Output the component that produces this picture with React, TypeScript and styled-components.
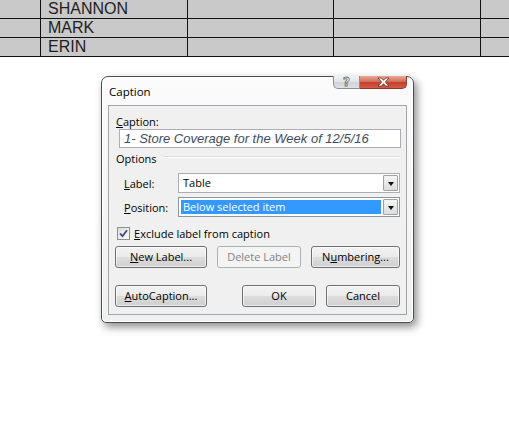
import { Fragment } from "react";
import styled, { createGlobalStyle } from "styled-components";

const GlobalStyle = createGlobalStyle`
  html, body {
    margin: 0;
    padding: 0;
    background: #fff;
  }
  body {
    font-family: "Open Sans", "Noto Sans", sans-serif;
  }
`;

const Page = styled.div`
  width: 509px;
  height: 437px;
  overflow: hidden;
  background: #fff;
`;

/* the Word table behind the dialog */
const Table = styled.div`
  display: grid;
  grid-template-columns: 41px 147px 146px 147px 1fr;
  grid-auto-rows: 19px;
  background: #c9c9c9;
`;

const Cell = styled.div<{ $last?: boolean }>`
  border-right: ${(p) => (p.$last ? "none" : "1px solid #111")};
  border-bottom: 1px solid #111;
  padding-left: 7px;
  font-family: "Liberation Sans", Arial, sans-serif;
  font-size: 16px;
  line-height: 18px;
  color: #1e1e1e;
`;

const DialogSpot = styled.div`
  margin: 19px 0 0 101px;
`;

const Window = styled.div`
  width: 313px;
  height: 247px;
  box-sizing: border-box;
  border: 1px solid #4e4e4e;
  border-radius: 7px 7px 5px 5px;
  background: linear-gradient(#fbfbfc, #eef0f2);
  box-shadow: inset 0 0 0 1px rgba(255, 255, 255, 0.9),
    3px 4px 9px rgba(0, 0, 0, 0.45);
  padding: 0 6px 7px 6px;
  display: flex;
  flex-direction: column;
`;

const TitleBar = styled.div`
  height: 28px;
  display: flex;
  justify-content: space-between;
`;

const TitleText = styled.div`
  align-self: center;
  padding-left: 1px;
  font-size: 11.5px;
  color: #000;
`;

const CaptionButtons = styled.div`
  display: flex;
  margin-top: -1px;
  height: 13px;
`;

const CapButton = styled.div<{ $close?: boolean }>`
  width: ${(p) => (p.$close ? "47px" : "27px")};
  box-sizing: border-box;
  display: flex;
  align-items: center;
  justify-content: center;
  border: 1px solid ${(p) => (p.$close ? "#8d3a2c" : "#8b8f96")};
  border-top: none;
  border-left: ${(p) => (p.$close ? "none" : "1px solid #8b8f96")};
  border-radius: ${(p) => (p.$close ? "0 0 5px 0" : "0 0 0 5px")};
  background: ${(p) =>
    p.$close
      ? "linear-gradient(#e9a898 0%, #d4705d 45%, #c2402c 55%, #d55b45 100%)"
      : "linear-gradient(#f2f3f5 0%, #e1e4e8 45%, #ced3da 55%, #dde1e6 100%)"};
`;

const HelpGlyph = styled.span`
  font-family: "DejaVu Sans", sans-serif;
  font-weight: bold;
  font-size: 12px;
  line-height: 12px;
  color: #f7f7f7;
  -webkit-text-stroke: 0.8px #6a6e76;
`;

const Content = styled.div`
  flex: 1;
  border: 1px solid #a4a4a4;
  background: #f0f0f0;
  padding: 8px 6px 0 6px;
  display: flex;
  flex-direction: column;
  font-size: 11px;
  color: #000;
`;

const Mn = styled.span`
  text-decoration: underline;
  text-underline-offset: 1px;
`;

const FieldLabel = styled.div`
  line-height: 15px;
  padding-left: 1px;
`;

const TextBox = styled.div`
  margin-left: 4px;
  width: 282px;
  height: 19px;
  box-sizing: border-box;
  border: 1px solid #abadb3;
  background: #fff;
  padding-left: 4px;
  font-family: "Liberation Sans", Arial, sans-serif;
  font-style: italic;
  font-size: 13px;
  line-height: 17px;
  color: #3f4b60;
  white-space: nowrap;
`;

const GroupHead = styled.div`
  margin-top: 3px;
  height: 16px;
  display: flex;
  align-items: center;
  gap: 6px;
  padding-left: 1px;
  line-height: 16px;

  &::after {
    content: "";
    flex: 1;
    height: 0;
    margin-top: -4px;
    border-top: 1px solid #d5dfe5;
    border-bottom: 1px solid #fff;
  }
`;

const FieldRow = styled.div<{ $gap: number }>`
  margin-top: ${(p) => p.$gap}px;
  display: flex;
  align-items: center;
  height: 20px;
`;

const RowLabel = styled.div`
  width: 63px;
  box-sizing: border-box;
  padding-left: 9px;
`;

const Combo = styled.div<{ $focus?: boolean }>`
  width: 222px;
  height: 20px;
  box-sizing: border-box;
  border: 1px solid ${(p) => (p.$focus ? "#8d95a0" : "#abadb3")};
  background: #fff;
  display: flex;
  align-items: stretch;
  padding: 1px;
`;

const ComboValue = styled.div<{ $selected?: boolean }>`
  flex: 1;
  margin: ${(p) => (p.$selected ? "1px 2px 1px 1px" : "0")};
  padding-left: ${(p) => (p.$selected ? "2px" : "3px")};
  background: ${(p) => (p.$selected ? "#3399ff" : "transparent")};
  color: ${(p) => (p.$selected ? "#fff" : "#000")};
  line-height: ${(p) => (p.$selected ? "14px" : "16px")};
`;

const DropButton = styled.div`
  width: 15px;
  box-sizing: border-box;
  border: 1px solid #a2a2a2;
  border-radius: 1px;
  background: linear-gradient(#f5f5f5, #dcdcdc);
  display: flex;
  align-items: center;
  justify-content: center;

  &::before {
    content: "";
    border-left: 3.5px solid transparent;
    border-right: 3.5px solid transparent;
    border-top: 4px solid #111;
    margin-top: 1px;
  }
`;

const CheckRow = styled.div`
  margin-top: 9px;
  height: 14px;
  display: flex;
  align-items: center;
  gap: 4px;
  padding-left: 2px;
`;

const CheckBox = styled.div`
  width: 13px;
  height: 13px;
  box-sizing: border-box;
  border: 1px solid #8e8f8f;
  background: linear-gradient(135deg, #dcdcdc, #fbfbfb);
  display: flex;
  align-items: center;
  justify-content: center;
`;

const ButtonRow = styled.div<{ $gap: number }>`
  margin-top: ${(p) => p.$gap}px;
  display: flex;
  justify-content: space-between;
  align-items: center;
`;

const ButtonPair = styled.div`
  display: flex;
  gap: 10px;
`;

const Button = styled.div<{ $w: number; $disabled?: boolean }>`
  width: ${(p) => p.$w}px;
  height: 22px;
  box-sizing: border-box;
  border: 1px solid ${(p) => (p.$disabled ? "#adb2b5" : "#707070")};
  border-radius: 3px;
  background: ${(p) =>
    p.$disabled
      ? "#f4f4f4"
      : "linear-gradient(#f2f2f2 0%, #ebebeb 50%, #dddddd 51%, #cfcfcf 100%)"};
  box-shadow: inset 0 0 0 1px ${(p) => (p.$disabled ? "transparent" : "rgba(255,255,255,0.6)")};
  color: ${(p) => (p.$disabled ? "#838383" : "#000")};
  display: flex;
  align-items: center;
  justify-content: center;
  line-height: 20px;
`;

const names = ["SHANNON", "MARK", "ERIN"];

export default function App() {
  return (
    <Page>
      <GlobalStyle />
      <Table>
        {names.map((n) => (
          <Fragment key={n}>
            <Cell />
            <Cell>{n}</Cell>
            <Cell />
            <Cell />
            <Cell $last />
          </Fragment>
        ))}
      </Table>

      <DialogSpot>
        <Window>
          <TitleBar>
            <TitleText>Caption</TitleText>
            <CaptionButtons>
              <CapButton>
                <HelpGlyph>?</HelpGlyph>
              </CapButton>
              <CapButton $close>
                <svg width="13" height="10" viewBox="0 0 13 10">
                  <path
                    d="M1 1 H4.5 L6.5 3.3 L8.5 1 H12 L8.3 5 L12 9 H8.5 L6.5 6.7 L4.5 9 H1 L4.7 5 Z"
                    fill="#fff"
                    stroke="#6b2a20"
                    strokeWidth="0.8"
                    strokeLinejoin="round"
                  />
                </svg>
              </CapButton>
            </CaptionButtons>
          </TitleBar>

          <Content>
            <FieldLabel>
              <Mn>C</Mn>aption:
            </FieldLabel>
            <TextBox>1- Store Coverage for the Week of 12/5/16</TextBox>

            <GroupHead>Options</GroupHead>

            <FieldRow $gap={6}>
              <RowLabel>
                <Mn>L</Mn>abel:
              </RowLabel>
              <Combo>
                <ComboValue>Table</ComboValue>
                <DropButton />
              </Combo>
            </FieldRow>
            <FieldRow $gap={4}>
              <RowLabel>
                <Mn>P</Mn>osition:
              </RowLabel>
              <Combo $focus>
                <ComboValue $selected>Below selected item</ComboValue>
                <DropButton />
              </Combo>
            </FieldRow>

            <CheckRow>
              <CheckBox>
                <svg width="9" height="9" viewBox="0 0 9 9">
                  <path
                    d="M1 4.5 L3.5 7.2 L8 1.2"
                    fill="none"
                    stroke="#3a4a78"
                    strokeWidth="1.8"
                  />
                </svg>
              </CheckBox>
              <span>
                <Mn>E</Mn>xclude label from caption
              </span>
            </CheckRow>

            <ButtonRow $gap={6}>
              <Button $w={92}>
                <span>
                  <Mn>N</Mn>ew Label...
                </span>
              </Button>
              <Button $w={84} $disabled>
                Delete Label
              </Button>
              <Button $w={89}>
                <span>
                  N<Mn>u</Mn>mbering...
                </span>
              </Button>
            </ButtonRow>

            <ButtonRow $gap={17}>
              <Button $w={92}>
                <span>
                  <Mn>A</Mn>utoCaption...
                </span>
              </Button>
              <ButtonPair>
                <Button $w={74}>OK</Button>
                <Button $w={74}>Cancel</Button>
              </ButtonPair>
            </ButtonRow>
          </Content>
        </Window>
      </DialogSpot>
    </Page>
  );
}
